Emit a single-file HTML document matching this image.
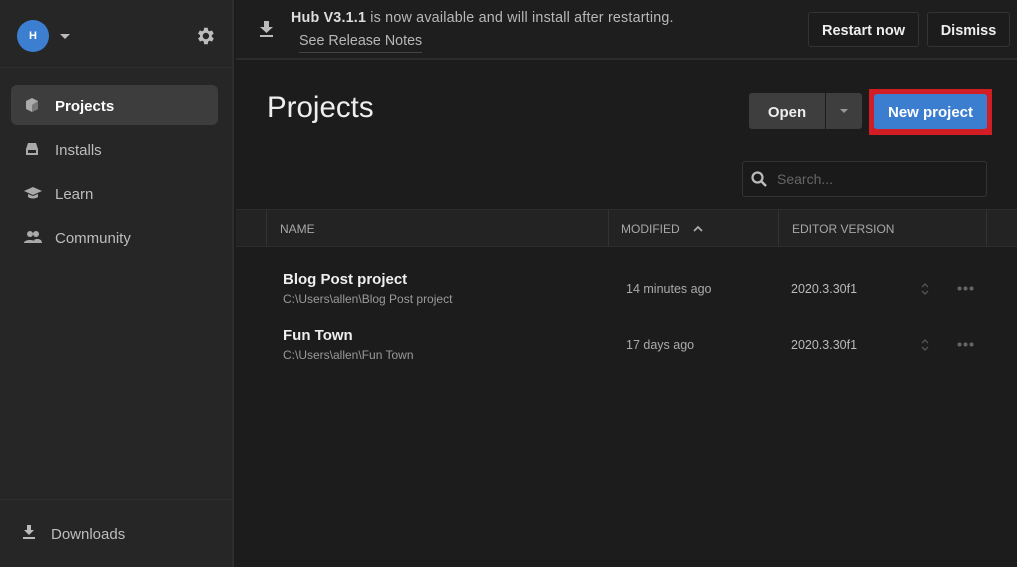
<!DOCTYPE html>
<html><head><meta charset="utf-8"><style>
*{box-sizing:border-box;margin:0;padding:0}
body{width:1017px;height:567px;overflow:hidden;background:#1c1c1c;font-family:"Liberation Sans",sans-serif;color:#ddd;position:relative}
.sb{position:absolute;left:0;top:0;width:234px;height:567px;background:#262626;border-right:2px solid #2e2e2e}
.abs{position:absolute}
.nav{position:absolute;left:11px;width:207px;height:40px;border-radius:6px;font-size:15px;color:#bdbdbd;display:flex;align-items:center;padding-left:44px;padding-top:2px}
.nav svg{position:absolute;left:13px;top:12px}
.btn{position:absolute;border-radius:3px;font-weight:bold;font-size:15px;display:flex;align-items:center;justify-content:center;color:#eee}
.hdr{position:absolute;top:210px;height:37px;font-size:12px;color:#a8a8a8;display:flex;align-items:center}
.t1{font-weight:bold;font-size:15px;color:#eee}
.t2{font-size:12px;color:#9a9a9a}
.c{font-size:12.5px;color:#aaa}
</style></head><body>
<div class="sb">
 <div class="abs" style="left:17px;top:20px;width:32px;height:32px;border-radius:50%;background:#3c7fd1;color:#fff;font-weight:bold;font-size:11px;display:flex;align-items:center;justify-content:center">H</div>
 <div class="abs" style="left:60px;top:34px;border:5px solid transparent;border-top:5px solid #bbb;border-bottom:0"></div>
 <svg class="abs" style="left:194px;top:25px" width="22" height="22" viewBox="0 0 24 24"><path fill="#bdbdbd" d="M19.4 13a7.5 7.5 0 000-2l2.1-1.6-2-3.5-2.5 1a7.5 7.5 0 00-1.7-1L15 3h-4l-.4 2.9a7.5 7.5 0 00-1.7 1l-2.5-1-2 3.5L6.6 11a7.5 7.5 0 000 2l-2.1 1.6 2 3.5 2.5-1a7.5 7.5 0 001.7 1L11 21h4l.4-2.9a7.5 7.5 0 001.7-1l2.5 1 2-3.5zM13 15.5a3.5 3.5 0 110-7 3.5 3.5 0 010 7z"/></svg>
 <div class="abs" style="left:0;top:67px;width:234px;height:1px;background:#2e2e2e"></div>
 <div class="nav" style="top:85px;background:#3d3d3d;color:#fff;font-weight:bold"><svg width="16" height="16" viewBox="0 0 16 16"><path fill="#aaa" d="M8 1l6 3v8l-6 3-6-3V4z"/><path fill="#777" d="M8 8l6-4v8l-6 3z"/></svg>Projects</div>
 <div class="nav" style="top:129px"><svg width="16" height="16" viewBox="0 0 16 16"><path fill="#aaa" d="M4 2h8l2 6v6H2V8zM4 9v3h8V9z"/></svg>Installs</div>
 <div class="nav" style="top:173px"><svg width="18" height="16" viewBox="0 0 18 16"><path fill="#aaa" d="M9 2l9 4-9 4-9-4zM4 9v3c2 2 8 2 10 0V9l-5 2z"/></svg>Learn</div>
 <div class="nav" style="top:217px"><svg width="18" height="16" viewBox="0 0 18 16"><circle cx="6" cy="5" r="3" fill="#aaa"/><circle cx="12" cy="5" r="3" fill="#aaa"/><path fill="#aaa" d="M0 14c0-4 12-4 12 0zM10 11c3-2 8-1 8 3h-6z"/></svg>Community</div>
 <div class="abs" style="left:0;top:499px;width:234px;height:1px;background:#2e2e2e"></div>
 <svg class="abs" style="left:22px;top:525px" width="14" height="14" viewBox="0 0 14 14"><path fill="#bbb" d="M5 0h4v5h3L7 10 2 5h3zM1 12h12v2H1z"/></svg>
 <div class="abs" style="left:51px;top:526px;font-size:15px;color:#bdbdbd">Downloads</div>
</div>
<div class="abs" style="left:236px;top:0;width:781px;height:60px;background:#1e1e1e;border-bottom:2px solid #2c2c2c"></div>
<svg class="abs" style="left:259px;top:21px" width="15" height="16" viewBox="0 0 15 16"><path fill="#bbb" d="M5 0h5v6h4l-6.5 6L1 6h4zM1 14h13v2H1z"/></svg>
<div class="abs" style="left:291px;top:10px;font-size:14.3px;color:#b8b8b8;letter-spacing:0.2px"><b style="color:#ddd">Hub V3.1.1</b> is now available and will install after restarting.</div>
<div class="abs" style="left:299px;top:33px;font-size:14.3px;color:#b8b8b8;border-bottom:1px solid #444;padding-bottom:3px">See Release Notes</div>
<div class="btn" style="left:808px;top:12px;width:111px;height:35px;border:1px solid #333;background:#1c1c1c;font-size:14.5px;padding-top:2px">Restart now</div>
<div class="btn" style="left:927px;top:12px;width:83px;height:35px;border:1px solid #333;background:#1c1c1c;font-size:14.5px;padding-top:2px">Dismiss</div>
<div class="abs" style="left:267px;top:91px;font-size:29.5px;color:#eee">Projects</div>
<div class="btn" style="left:749px;top:93px;width:76px;height:36px;background:#3e3e3e;border-radius:3px 0 0 3px;padding-top:2px">Open</div>
<div class="btn" style="left:826px;top:93px;width:36px;height:36px;background:#3e3e3e;border-radius:0 3px 3px 0"><span style="border:4px solid transparent;border-top:4px solid #999;border-bottom:0"></span></div>
<div class="abs" style="left:869px;top:89px;width:123px;height:46px;background:#d11d24"></div>
<div class="btn" style="left:874px;top:94px;width:113px;height:35px;background:#3b7ed0;color:#fff;padding-top:2px">New project</div>
<div class="abs" style="left:742px;top:161px;width:245px;height:36px;border:1px solid #333;border-radius:3px;background:#1a1a1a"></div>
<svg class="abs" style="left:750px;top:170px" width="18" height="18" viewBox="0 0 18 18"><circle cx="7.5" cy="7.5" r="5" fill="none" stroke="#bbb" stroke-width="2.2"/><path d="M11 11l5 5" stroke="#bbb" stroke-width="2.5"/></svg>
<div class="abs" style="left:777px;top:171px;font-size:14px;color:#666">Search...</div>
<div class="abs" style="left:236px;top:209px;width:781px;height:38px;background:#232323;border-top:1px solid #2c2c2c;border-bottom:1px solid #2c2c2c"></div>
<div class="abs" style="left:266px;top:210px;width:1px;height:36px;background:#333"></div>
<div class="abs" style="left:608px;top:210px;width:1px;height:36px;background:#333"></div>
<div class="abs" style="left:778px;top:210px;width:1px;height:36px;background:#333"></div>
<div class="abs" style="left:986px;top:210px;width:1px;height:36px;background:#333"></div>
<div class="hdr" style="left:280px">NAME</div>
<div class="hdr" style="left:621px">MODIFIED <svg style="margin-left:13px" width="10" height="7" viewBox="0 0 10 7"><path d="M1 6l4-4 4 4" stroke="#aaa" stroke-width="1.8" fill="none"/></svg></div>
<div class="hdr" style="left:792px">EDITOR VERSION</div>
<div class="abs t1" style="left:283px;top:271px">Blog Post project</div>
<div class="abs t2" style="left:283px;top:292px">C:\Users\allen\Blog Post project</div>
<div class="abs c" style="left:626px;top:282px">14 minutes ago</div>
<div class="abs c" style="left:791px;top:282px;color:#bbb">2020.3.30f1</div>
<div class="abs t1" style="left:283px;top:327px">Fun Town</div>
<div class="abs t2" style="left:283px;top:348px">C:\Users\allen\Fun Town</div>
<div class="abs c" style="left:626px;top:338px">17 days ago</div>
<div class="abs c" style="left:791px;top:338px;color:#bbb">2020.3.30f1</div>
<svg class="abs" style="left:920px;top:282px" width="10" height="14" viewBox="0 0 10 14"><path d="M2 5l3-3 3 3M2 9l3 3 3-3" stroke="#555" stroke-width="1.3" fill="none"/></svg>
<svg class="abs" style="left:920px;top:338px" width="10" height="14" viewBox="0 0 10 14"><path d="M2 5l3-3 3 3M2 9l3 3 3-3" stroke="#555" stroke-width="1.3" fill="none"/></svg>
<svg class="abs" style="left:957px;top:286px" width="17" height="5" viewBox="0 0 17 5"><circle cx="2.5" cy="2.5" r="2" fill="#666"/><circle cx="8.5" cy="2.5" r="2" fill="#666"/><circle cx="14.5" cy="2.5" r="2" fill="#666"/></svg>
<svg class="abs" style="left:957px;top:342px" width="17" height="5" viewBox="0 0 17 5"><circle cx="2.5" cy="2.5" r="2" fill="#666"/><circle cx="8.5" cy="2.5" r="2" fill="#666"/><circle cx="14.5" cy="2.5" r="2" fill="#666"/></svg>
</body></html>
